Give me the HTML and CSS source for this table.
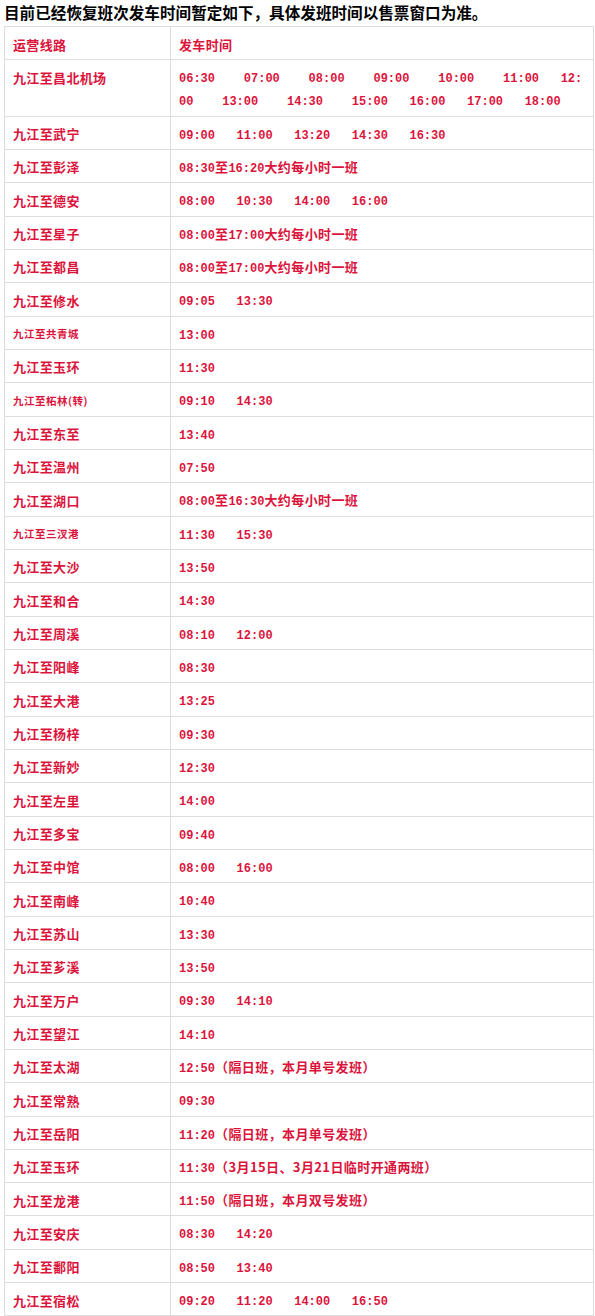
FILE: index.html
```html
<!DOCTYPE html>
<html lang="zh-CN">
<head>
<meta charset="utf-8">
<title>九江发车时间</title>
<link rel="stylesheet" href="styles.css">
</head>
<body>
<p class="notice">目前已经恢复班次发车时间暂定如下，具体发班时间以售票窗口为准。</p>
<table class="schedule">
<colgroup><col class="c-route"><col class="c-time"></colgroup>
<tbody>
<tr><td class="route">运营线路</td><td class="route">发车时间</td></tr>
<tr><td class="route">九江至昌北机场</td><td class="time">06:30&nbsp;&nbsp;&nbsp;&nbsp;07:00&nbsp;&nbsp;&nbsp;&nbsp;08:00&nbsp;&nbsp;&nbsp;&nbsp;09:00&nbsp;&nbsp;&nbsp;&nbsp;10:00&nbsp;&nbsp;&nbsp;&nbsp;11:00&nbsp;&nbsp;&nbsp;12:00&nbsp;&nbsp;&nbsp;&nbsp;13:00&nbsp;&nbsp;&nbsp;&nbsp;14:30&nbsp;&nbsp;&nbsp;&nbsp;15:00&nbsp;&nbsp;&nbsp;16:00&nbsp;&nbsp;&nbsp;17:00&nbsp;&nbsp;&nbsp;18:00</td></tr>
<tr><td class="route">九江至武宁</td><td class="time">09:00&nbsp;&nbsp;&nbsp;11:00&nbsp;&nbsp;&nbsp;13:20&nbsp;&nbsp;&nbsp;14:30&nbsp;&nbsp;&nbsp;16:30</td></tr>
<tr><td class="route">九江至彭泽</td><td class="time">08:30<span class="zh">至</span>16:20<span class="zh">大约每小时一班</span></td></tr>
<tr><td class="route">九江至德安</td><td class="time">08:00&nbsp;&nbsp;&nbsp;10:30&nbsp;&nbsp;&nbsp;14:00&nbsp;&nbsp;&nbsp;16:00</td></tr>
<tr><td class="route">九江至星子</td><td class="time">08:00<span class="zh">至</span>17:00<span class="zh">大约每小时一班</span></td></tr>
<tr><td class="route">九江至都昌</td><td class="time">08:00<span class="zh">至</span>17:00<span class="zh">大约每小时一班</span></td></tr>
<tr><td class="route">九江至修水</td><td class="time">09:05&nbsp;&nbsp;&nbsp;13:30</td></tr>
<tr><td class="route sm">九江至共青城</td><td class="time">13:00</td></tr>
<tr><td class="route">九江至玉环</td><td class="time">11:30</td></tr>
<tr><td class="route sm">九江至柘林(转)</td><td class="time">09:10&nbsp;&nbsp;&nbsp;14:30</td></tr>
<tr><td class="route">九江至东至</td><td class="time">13:40</td></tr>
<tr><td class="route">九江至温州</td><td class="time">07:50</td></tr>
<tr><td class="route">九江至湖口</td><td class="time">08:00<span class="zh">至</span>16:30<span class="zh">大约每小时一班</span></td></tr>
<tr><td class="route sm">九江至三汊港</td><td class="time">11:30&nbsp;&nbsp;&nbsp;15:30</td></tr>
<tr><td class="route">九江至大沙</td><td class="time">13:50</td></tr>
<tr><td class="route">九江至和合</td><td class="time">14:30</td></tr>
<tr><td class="route">九江至周溪</td><td class="time">08:10&nbsp;&nbsp;&nbsp;12:00</td></tr>
<tr><td class="route">九江至阳峰</td><td class="time">08:30</td></tr>
<tr><td class="route">九江至大港</td><td class="time">13:25</td></tr>
<tr><td class="route">九江至杨梓</td><td class="time">09:30</td></tr>
<tr><td class="route">九江至新妙</td><td class="time">12:30</td></tr>
<tr><td class="route">九江至左里</td><td class="time">14:00</td></tr>
<tr><td class="route">九江至多宝</td><td class="time">09:40</td></tr>
<tr><td class="route">九江至中馆</td><td class="time">08:00&nbsp;&nbsp;&nbsp;16:00</td></tr>
<tr><td class="route">九江至南峰</td><td class="time">10:40</td></tr>
<tr><td class="route">九江至苏山</td><td class="time">13:30</td></tr>
<tr><td class="route">九江至芗溪</td><td class="time">13:50</td></tr>
<tr><td class="route">九江至万户</td><td class="time">09:30&nbsp;&nbsp;&nbsp;14:10</td></tr>
<tr><td class="route">九江至望江</td><td class="time">14:10</td></tr>
<tr><td class="route">九江至太湖</td><td class="time">12:50<span class="zh">（隔日班，本月单号发班）</span></td></tr>
<tr><td class="route">九江至常熟</td><td class="time">09:30</td></tr>
<tr><td class="route">九江至岳阳</td><td class="time">11:20<span class="zh">（隔日班，本月单号发班）</span></td></tr>
<tr><td class="route">九江至玉环</td><td class="time">11:30<span class="zh">（3月15日、3月21日临时开通两班）</span></td></tr>
<tr><td class="route">九江至龙港</td><td class="time">11:50<span class="zh">（隔日班，本月双号发班）</span></td></tr>
<tr><td class="route">九江至安庆</td><td class="time">08:30&nbsp;&nbsp;&nbsp;14:20</td></tr>
<tr><td class="route">九江至鄱阳</td><td class="time">08:50&nbsp;&nbsp;&nbsp;13:40</td></tr>
<tr><td class="route">九江至宿松</td><td class="time">09:20&nbsp;&nbsp;&nbsp;11:20&nbsp;&nbsp;&nbsp;14:00&nbsp;&nbsp;&nbsp;16:50</td></tr>
</tbody>
</table>
</body>
</html>
```
FILE: styles.css
```css
html, body {
  background: #fff;
}

body {
  margin: 0;
  padding: 2px 4px 0;
}

.notice {
  margin: 0;
  font-family: "Noto Sans CJK SC", sans-serif;
  font-weight: bold;
  font-size: 15.6px;
  line-height: 20px;
  color: #000;
  white-space: nowrap;
}

.schedule {
  margin-top: 4px;
  border-collapse: collapse;
  table-layout: fixed;
  width: 589px;
}

.c-route {
  width: 166px;
}

.c-time {
  width: 423px;
}

.schedule td {
  border: 1px solid #dddddd;
  padding: 5.5px 8px 3.83px;
  line-height: 23px;
  vertical-align: top;
  color: #dc143c;
  font-weight: bold;
}

.route {
  font-family: "Noto Sans CJK SC", sans-serif;
  font-size: 13px;
  letter-spacing: 0.35px;
}

.route.sm {
  font-size: 10.5px;
  letter-spacing: 0.5px;
}

.time {
  font-family: "Liberation Mono", "Noto Sans CJK SC", monospace;
  font-size: 12px;
  word-break: break-all;
}

.schedule td.time {
  padding-top: 8px;
  padding-bottom: 1.33px;
}

.zh {
  font-family: "Noto Sans CJK SC", sans-serif;
  font-size: 13px;
  line-height: 13px;
  letter-spacing: 0.4px;
}
```
